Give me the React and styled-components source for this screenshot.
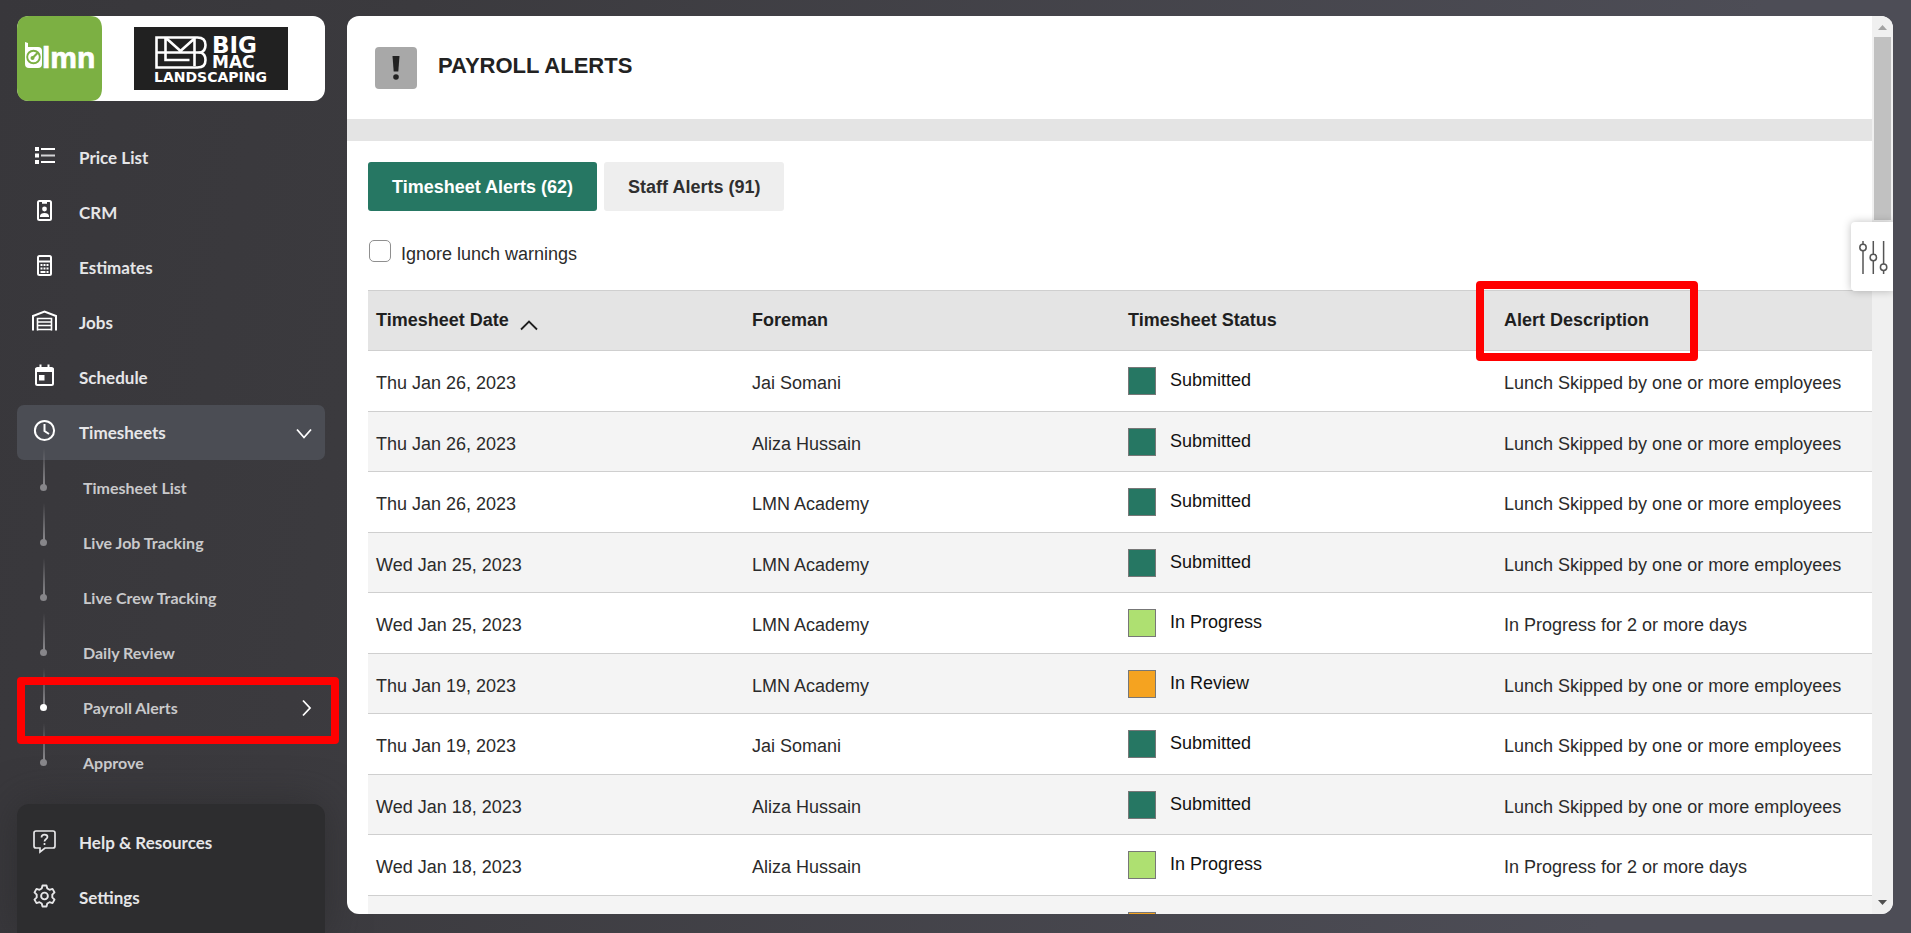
import React, { useState } from 'react';
import styled, { createGlobalStyle, css } from 'styled-components';

const GlobalStyle = createGlobalStyle`
  * {
    box-sizing: border-box;
  }

  body {
    margin: 0;
    font-family: "Liberation Sans", Arial, sans-serif;
    font-size: 18px;
    color: #2b2b2b;
  }
`;

const Shell = styled.div`
  display: flex;
  gap: 22px;
  height: 100vh;
  padding: 16px 18px 0 17px;
  overflow: hidden;
  background: linear-gradient(100deg, #38373b 0%, #3b3a3e 20%, #4d4d56 85%);
`;

/* ---------- sidebar ---------- */

const Sidebar = styled.aside`
  display: flex;
  flex-direction: column;
  flex: 0 0 308px;
  font-family: Lato, "Open Sans", sans-serif;
`;

const Brand = styled.a`
  display: flex;
  align-items: center;
  height: 85px;
  margin-bottom: 29px;
  padding-right: 5px;
  border-radius: 12px;
  background: #fff;
  flex-shrink: 0;
`;

const Nav = styled.nav`
  display: flex;
  flex-direction: column;
`;

const NavItem = styled.a`
  display: flex;
  align-items: center;
  gap: 22px;
  height: 55px;
  padding: 0 12px 0 14px;
  border-radius: 7px;
  color: #e6e6e8;
  font-size: 17px;
  font-weight: bold;
  line-height: 20px;
  text-decoration: none;
  ${props => props.$active ? 'background: #4b4d54;' : ''}

  svg:first-child {
    margin-bottom: 4px;
  }
`;

const NavLabel = styled.span`
  flex: 1;
`;

const SubItem = styled.a`
  position: relative;
  display: flex;
  align-items: center;
  height: 55px;
  padding: 0 12px 0 66px;
  color: #c9c9cb;
  font-size: 16px;
  font-weight: bold;
  line-height: 20px;
  text-decoration: none;

  &::before {
    content: '';
    position: absolute;
    left: 26px;
    top: -12px;
    width: 2px;
    height: 38px;
    background: linear-gradient(transparent, #8b8a8e);
  }

  &::after {
    content: '';
    position: absolute;
    left: 23px;
    top: 24px;
    width: 7px;
    height: 7px;
    border-radius: 50%;
    background: ${props => props.$current ? '#fff' : '#87868a'};
  }
`;

const SidebarFooter = styled.div`
  flex: 1;
  margin-top: 14px;
  padding-top: 11px;
  border-radius: 12px 12px 0 0;
  background: #2d2d2f;
  box-shadow: 0 0 40px rgba(40, 40, 42, .6);
`;

const highlight = css`
  position: absolute;
  border: 8px solid #f00;
  border-radius: 4px;
  pointer-events: none;
  z-index: 2;
`;

const NavHighlight = styled.span`
  ${highlight}
  top: -3px;
  right: -14px;
  bottom: -9px;
  left: 0;
`;

const HeadHighlight = styled.span`
  ${highlight}
  top: -10px;
  left: -20px;
  width: 222px;
  height: 80px;
`;

/* ---------- main panel ---------- */

const Panel = styled.main`
  position: relative;
  display: flex;
  flex: 1;
  min-width: 0;
  margin-bottom: 19px;
  border-radius: 12px;
  overflow: hidden;
  background: #fff;
`;

const Content = styled.div`
  flex: 1;
  min-width: 0;
  overflow: hidden;
`;

const PageHeader = styled.header`
  display: flex;
  align-items: center;
  gap: 21px;
  height: 103px;
  padding: 0 28px;
`;

const Title = styled.h1`
  margin: 0 0 3px;
  font-size: 22px;
  line-height: 26px;
  color: #222;
`;

const Divider = styled.div`
  height: 22px;
  background: #e4e4e4;
`;

const Body = styled.section`
  padding: 21px 0 0 21px;
`;

const Tabs = styled.div`
  display: flex;
  gap: 7px;
`;

const Tab = styled.button`
  height: 49px;
  padding: 0 24px;
  border: none;
  border-radius: 3px;
  font: bold 18px/22px "Liberation Sans", Arial, sans-serif;
  color: ${props => props.$active ? '#fff' : '#2f2f2f'};
  background: ${props => props.$active ? '#267763' : '#eee'};
  cursor: pointer;
`;

const LunchToggle = styled.label`
  display: flex;
  align-items: flex-start;
  gap: 10px;
  height: 50px;
  margin-top: 29px;
  padding-left: 1px;
  line-height: 28px;
`;

const Checkbox = styled.input`
  appearance: none;
  width: 22px;
  height: 22px;
  margin: 0;
  border: 1px solid #8f8f8f;
  border-radius: 5px;
  background: #fff;

  &:checked {
    background: #267763;
  }
`;

const Table = styled.table`
  width: 100%;
  border-collapse: separate;
  border-spacing: 0;
  border-top: 1px solid #cfcfcf;
  table-layout: fixed;
`;

const Th = styled.th`
  position: relative;
  height: 60px;
  padding: 0 8px;
  border-bottom: 1px solid #cfcfcf;
  background: #e4e4e4;
  color: #1f1f1f;
  text-align: left;
`;

const SortLabel = styled.span`
  display: inline-flex;
  align-items: center;
  gap: 10px;

  svg {
    margin-top: 9px;
  }
`;

const Row = styled.tr`
  height: 61px;

  &:nth-child(even) {
    height: 60px;
    background: #f4f4f4;
  }
`;

const Td = styled.td`
  padding: 5px 8px 0;
  border-bottom: 1px solid #cfcfcf;
  white-space: nowrap;
`;

const StatusTd = styled(Td)`
  padding: 0 8px;
`;

const Status = styled.span`
  display: flex;
  gap: 14px;
  color: #111;
  line-height: 26px;
`;

const Swatch = styled.span`
  width: 28px;
  height: 28px;
  border: 1px solid #777;
  background: ${props => props.$color};
`;

const ScrollTrack = styled.div`
  display: flex;
  flex-direction: column;
  align-items: center;
  flex: 0 0 21px;
  background: #f0f0f0;
`;

const ScrollThumb = styled.div`
  width: 17px;
  height: 183px;
  margin-bottom: auto;
  background: #c1c1c1;
`;

const Drawer = styled.div`
  position: absolute;
  top: 206px;
  right: 0;
  width: 0;
  height: 370px;
  box-shadow: 0 0 9px rgba(0, 0, 0, .3);
`;

const FilterButton = styled.button`
  position: absolute;
  top: 0;
  right: 0;
  display: flex;
  align-items: center;
  width: 42px;
  height: 69px;
  padding: 0 0 0 7px;
  border: none;
  border-radius: 4px 0 0 4px;
  background: #fff;
  box-shadow: 0 0 8px rgba(0, 0, 0, .25);
  cursor: pointer;
`;

/* ---------- icons ---------- */

const Icon = ({ children }) => (
  <svg width="26" height="26" viewBox="0 0 26 26" fill="none" stroke="#fff" strokeWidth="2" aria-hidden="true">
    {children}
  </svg>
);

const icons = {
  list: (
    <Icon>
      <path d="M10 6h14M10 19h14" />
      <path d="M10 12.5h14" stroke="#d4d4d6" />
      <path d="M4 6h4M4 12.5h4M4 19h4" strokeWidth="4" />
    </Icon>
  ),
  crm: (
    <Icon>
      <rect x="7" y="3" width="13" height="19" rx="1.5" />
      <path d="M11 4.5h5" strokeWidth="2.5" />
      <circle cx="13.5" cy="11" r="2.4" fill="#fff" stroke="none" />
      <path d="M9 19v-1c0-2 2-3 4.5-3s4.5 1 4.5 3v1z" fill="#fff" stroke="none" />
    </Icon>
  ),
  calculator: (
    <Icon>
      <rect x="7" y="3" width="13" height="19" rx="1.5" />
      <path d="M7 8.5h13" />
      <path d="M9.5 12h2m1 0h2m1 0h2M9.5 15.5h2m1 0h2m1 0h2M9.5 19h5m1 0h2" />
    </Icon>
  ),
  garage: (
    <Icon>
      <path d="M2 22.5V8l11.5-4.5L25 8v14.5" />
      <path d="M6.5 22.5V10.5h14v12" strokeWidth="1.6" />
      <path d="M6 14h15M6 17.5h15M6 21.5h15" strokeWidth="1.6" />
    </Icon>
  ),
  calendar: (
    <Icon>
      <rect x="5" y="5" width="17" height="17" rx="1.5" />
      <path d="M4.500 7h18" strokeWidth="4" />
      <path d="M9.5 1.5V5M17.5 1.5V5" />
      <rect x="8" y="12" width="5.5" height="5.5" fill="#fff" stroke="none" />
    </Icon>
  ),
  clock: (
    <Icon>
      <circle cx="13.5" cy="12.5" r="9.6" />
      <path d="M13.5 6v7l4.5 3" />
    </Icon>
  ),
  help: (
    <Icon>
      <path d="M5 3h17q2 0 2 2v13q0 2-2 2h-8l-5 4v-4H5q-2 0-2-2V5q0-2 2-2z" stroke="#e6e6e8" strokeWidth="1.7" />
      <path d="M10.5 9.5c0-4 6-3.5 6-.5 0 2-3 2-3 4.5M13.5 15v2" stroke="#e6e6e8" strokeWidth="1.7" />
    </Icon>
  ),
  gear: (
    <Icon>
      <g transform="translate(.5 0)" stroke="#e6e6e8" strokeWidth="1.9">
        <circle cx="13" cy="13" r="3.4" />
        <path
          strokeLinejoin="round"
          d="M11 2.500h4l.8 3 2.2 1.3 3-.9 2 3.5-2.2 2.2v2.800l2.2 2.2-2 3.5-3-.9-2.2 1.3-.8 3h-4l-.8-3L8 19.2l-3 .9-2-3.5 2.2-2.2v-2.800L3 9.400l2-3.500 3 .9 2.2-1.3z"
        />
      </g>
    </Icon>
  ),
};

const LmnLogo = () => (
  <svg width="85" height="85" viewBox="0 0 85 85" role="img" aria-label="LMN">
    <path d="M12 0h61Q85 0 85 13v59Q85 85 73 85H12Q0 85 0 72V13Q0 0 12 0z" fill="#7cb043" />
    <path d="M8 26l3 1v4h10q4 0 4 4v13q0 4-4 4H12q-4 0-4-4z" fill="#fff" />
    <circle cx="16.5" cy="41" r="6.3" fill="#fff" stroke="#7cb043" strokeWidth="1.9" />
    <path d="M15.5 42l5-5" stroke="#7cb043" strokeWidth="2.2" />
    <circle cx="15.5" cy="42" r="2" fill="#7cb043" />
    <text
      x="25"
      y="52"
      fill="#fff"
      stroke="#fff"
      strokeWidth=".7"
      fontFamily="Liberation Sans, sans-serif"
      fontWeight="bold"
      fontSize="30"
    >
      lmn
    </text>
  </svg>
);

const CompanyLogo = styled.svg`
  margin: 0 auto;
  font-family: "DejaVu Sans", sans-serif;
  font-weight: bold;
`;

const BigMacLogo = () => (
  <CompanyLogo width="154" height="63" viewBox="0 0 154 63" role="img" aria-label="Big Mac Landscaping">
    <rect width="154" height="63" fill="#212121" />
    <g fill="none" stroke="#fff" strokeWidth="2.6">
      <path d="M22.5 10.5h41q8 0 8 7.5 0 6-5 7.5 5 1.5 5 7.5 0 7.500-8 7.500h-41z" />
      <path d="M22.5 25.500h44M31.500 10.500v22.500h24M32 11l14.500 13L61 11M60.500 11v28" />
    </g>
    <g fill="#fff">
      <text x="78" y="26" fontSize="23">BIG</text>
      <text x="78" y="41" fontSize="17">MAC</text>
      <text x="20" y="55" fontSize="14">LANDSCAPING</text>
    </g>
  </CompanyLogo>
);

const Chevron = ({ d, width, height, color = '#fff' }) => (
  <svg width={width} height={height} viewBox={`0 0 ${width} ${height}`} fill="none" stroke={color} strokeWidth="1.8" aria-hidden="true">
    <path d={d} />
  </svg>
);

const AlertIcon = () => (
  <svg width="42" height="42" viewBox="0 0 42 42" aria-hidden="true">
    <rect width="42" height="42" rx="4" fill="#a8a8a8" />
    <path d="M17.5 9h7l-1.2 15.5h-4.6z" fill="#222" />
    <circle cx="21" cy="30" r="2.8" fill="#222" />
  </svg>
);

const SlidersIcon = () => (
  <svg width="30" height="34" viewBox="0 0 30 34" fill="#fff" stroke="#555" strokeWidth="1.5" aria-hidden="true">
    <path d="M5 1v33M15.3 1v33M25.6 1v33" />
    <circle cx="5" cy="7.5" r="3.2" />
    <circle cx="15.3" cy="17.5" r="3.2" />
    <circle cx="25.6" cy="27.3" r="3.2" />
  </svg>
);

/* ---------- data ---------- */

const mainLinks = [
  { label: 'Price List', icon: 'list' },
  { label: 'CRM', icon: 'crm' },
  { label: 'Estimates', icon: 'calculator' },
  { label: 'Jobs', icon: 'garage' },
  { label: 'Schedule', icon: 'calendar' },
  { label: 'Timesheets', icon: 'clock', active: true },
];

const subLinks = ['Timesheet List', 'Live Job Tracking', 'Live Crew Tracking', 'Daily Review', 'Payroll Alerts', 'Approve'];

const footerLinks = [
  { label: 'Help & Resources', icon: 'help' },
  { label: 'Settings', icon: 'gear' },
];

const statusColors = {
  'Submitted': '#267763',
  'In Progress': '#aee071',
  'In Review': '#f5a320',
};

const SKIPPED = 'Lunch Skipped by one or more employees';
const STALE = 'In Progress for 2 or more days';

const alerts = [
  ['Thu Jan 26, 2023', 'Jai Somani', 'Submitted', SKIPPED],
  ['Thu Jan 26, 2023', 'Aliza Hussain', 'Submitted', SKIPPED],
  ['Thu Jan 26, 2023', 'LMN Academy', 'Submitted', SKIPPED],
  ['Wed Jan 25, 2023', 'LMN Academy', 'Submitted', SKIPPED],
  ['Wed Jan 25, 2023', 'LMN Academy', 'In Progress', STALE],
  ['Thu Jan 19, 2023', 'LMN Academy', 'In Review', SKIPPED],
  ['Thu Jan 19, 2023', 'Jai Somani', 'Submitted', SKIPPED],
  ['Wed Jan 18, 2023', 'Aliza Hussain', 'Submitted', SKIPPED],
  ['Wed Jan 18, 2023', 'Aliza Hussain', 'In Progress', STALE],
  ['Wed Jan 18, 2023', 'Jai Somani', 'In Review', SKIPPED],
];

function SideNav() {
  return (
    <Sidebar>
      <Brand href="#">
        <LmnLogo />
        <BigMacLogo />
      </Brand>
      <Nav>
        {mainLinks.map(({ label, icon, active }) => (
          <NavItem key={label} href="#" $active={active}>
            {icons[icon]}
            <NavLabel>{label}</NavLabel>
            {active && <Chevron width={18} height={12} d="M2 2.5l7 8 7-8" />}
          </NavItem>
        ))}
        {subLinks.map(label => {
          const current = label === 'Payroll Alerts';
          return (
            <SubItem key={label} href="#" $current={current}>
              <NavLabel>{label}</NavLabel>
              {current && <Chevron width={12} height={18} d="M2 1.5l7 7.5-7 7.5" />}
              {current && <NavHighlight />}
            </SubItem>
          );
        })}
      </Nav>
      <SidebarFooter>
        {footerLinks.map(({ label, icon }) => (
          <NavItem key={label} href="#">
            {icons[icon]}
            <NavLabel>{label}</NavLabel>
          </NavItem>
        ))}
      </SidebarFooter>
    </Sidebar>
  );
}

function AlertsTable() {
  return (
    <Table>
      <thead>
        <tr>
          <Th>
            <SortLabel>
              Timesheet Date
              <Chevron width={20} height={12} color="#1f1f1f" d="M2 10.5l8-8 8 8" />
            </SortLabel>
          </Th>
          <Th>Foreman</Th>
          <Th>Timesheet Status</Th>
          <Th>
            Alert Description
            <HeadHighlight />
          </Th>
        </tr>
      </thead>
      <tbody>
        {alerts.map(([date, foreman, status, description], i) => (
          <Row key={i}>
            <Td>{date}</Td>
            <Td>{foreman}</Td>
            <StatusTd>
              <Status>
                <Swatch $color={statusColors[status]} />
                {status}
              </Status>
            </StatusTd>
            <Td>{description}</Td>
          </Row>
        ))}
      </tbody>
    </Table>
  );
}

function App() {
  const [tab, setTab] = useState('timesheet');
  const [ignoreLunch, setIgnoreLunch] = useState(false);

  return (
    <>
      <GlobalStyle />
      <Shell>
        <SideNav />
        <Panel>
          <Content>
            <PageHeader>
              <AlertIcon />
              <Title>PAYROLL ALERTS</Title>
            </PageHeader>
            <Divider />
            <Body>
              <Tabs>
                <Tab $active={tab === 'timesheet'} onClick={() => setTab('timesheet')}>Timesheet Alerts (62)</Tab>
                <Tab $active={tab === 'staff'} onClick={() => setTab('staff')}>Staff Alerts (91)</Tab>
              </Tabs>
              <LunchToggle>
                <Checkbox
                  type="checkbox"
                  checked={ignoreLunch}
                  onChange={(e) => setIgnoreLunch(e.target.checked)}
                />
                Ignore lunch warnings
              </LunchToggle>
              <AlertsTable />
            </Body>
          </Content>
          <ScrollTrack>
            <svg width="21" height="21" viewBox="0 0 21 21" aria-hidden="true">
              <path d="M6 14l4.5-5 4.5 5z" fill="#a3a3a3" />
            </svg>
            <ScrollThumb />
            <svg width="21" height="21" viewBox="0 0 21 21" aria-hidden="true">
              <path d="M6 7l4.5 5L15 7z" fill="#505050" />
            </svg>
          </ScrollTrack>
          <Drawer>
            <FilterButton aria-label="Filters">
              <SlidersIcon />
            </FilterButton>
          </Drawer>
        </Panel>
      </Shell>
    </>
  );
}

export default App;
